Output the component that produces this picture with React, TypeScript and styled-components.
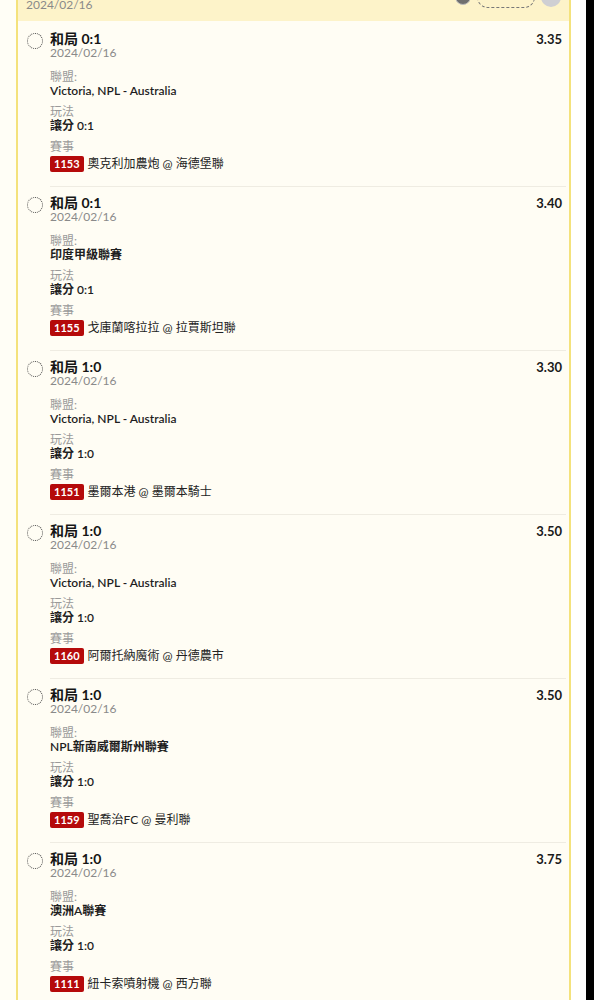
import styled, { createGlobalStyle } from "styled-components";

interface Bet {
  id: string;
  pick: string;
  odds: string;
  date: string;
  league: string;
  market: string;
  matchNo: string;
  match: string;
}

const bets: Bet[] = [
  { id: "a", pick: "和局 0:1", odds: "3.35", date: "2024/02/16", league: "Victoria, NPL - Australia", market: "讓分 0:1", matchNo: "1153", match: "奧克利加農炮 @ 海德堡聯" },
  { id: "b", pick: "和局 0:1", odds: "3.40", date: "2024/02/16", league: "印度甲級聯賽", market: "讓分 0:1", matchNo: "1155", match: "戈庫蘭喀拉拉 @ 拉賈斯坦聯" },
  { id: "c", pick: "和局 1:0", odds: "3.30", date: "2024/02/16", league: "Victoria, NPL - Australia", market: "讓分 1:0", matchNo: "1151", match: "墨爾本港 @ 墨爾本騎士" },
  { id: "d", pick: "和局 1:0", odds: "3.50", date: "2024/02/16", league: "Victoria, NPL - Australia", market: "讓分 1:0", matchNo: "1160", match: "阿爾托納魔術 @ 丹德農市" },
  { id: "e", pick: "和局 1:0", odds: "3.50", date: "2024/02/16", league: "NPL新南威爾斯州聯賽", market: "讓分 1:0", matchNo: "1159", match: "聖喬治FC @ 曼利聯" },
  { id: "f", pick: "和局 1:0", odds: "3.75", date: "2024/02/16", league: "澳洲A聯賽", market: "讓分 1:0", matchNo: "1111", match: "紐卡索噴射機 @ 西方聯" },
];

const GlobalStyle = createGlobalStyle`
  body {
    margin: 0;
    background: #ffffff;
    font-family: Lato, "Noto Sans CJK TC", sans-serif;
    color: #1c1c1c;
    overflow: hidden;
  }
`;

export default function App() {
  return (
    <>
      <GlobalStyle />
      <StyledPage>
        <StyledMain>
          <StyledCard>
            <StyledHeader>
              <StyledHeaderText>
                <StyledTitle>注單</StyledTitle>
                <StyledDate>2024/02/16</StyledDate>
              </StyledHeaderText>
              <StyledHeaderTools>
                <StyledDot />
                <StyledPill />
                <StyledAvatar />
              </StyledHeaderTools>
            </StyledHeader>
            <StyledList>
              {bets.map((bet) => (
                <StyledItem key={bet.id}>
                  <StyledRadio aria-label="select" />
                  <StyledBody>
                    <StyledTopRow>
                      <StyledTitle>{bet.pick}</StyledTitle>
                      <StyledOdds>{bet.odds}</StyledOdds>
                    </StyledTopRow>
                    <StyledDate>{bet.date}</StyledDate>
                    <StyledFields>
                      <StyledField>
                        <StyledLabel>聯盟:</StyledLabel>
                        <StyledValue>{bet.league}</StyledValue>
                      </StyledField>
                      <StyledField>
                        <StyledLabel>玩法</StyledLabel>
                        <StyledValue>{bet.market}</StyledValue>
                      </StyledField>
                      <StyledField>
                        <StyledLabel>賽事</StyledLabel>
                        <StyledMatchRow>
                          <StyledBadge>{bet.matchNo}</StyledBadge>
                          <StyledMatch>{bet.match}</StyledMatch>
                        </StyledMatchRow>
                      </StyledField>
                    </StyledFields>
                  </StyledBody>
                </StyledItem>
              ))}
            </StyledList>
          </StyledCard>
        </StyledMain>
        <StyledScrollbar />
      </StyledPage>
    </>
  );
}

const StyledPage = styled.div`
  display: flex;
  height: 1000px;
  overflow: hidden;
`;

const StyledMain = styled.div`
  flex: 1;
  padding: 0 15px 0 16px;
  background: linear-gradient(to right, #fffef6 16px, #ffffff 16px);
`;

const StyledScrollbar = styled.div`
  width: 8px;
  background: #000000;
`;

const StyledCard = styled.section`
  margin-top: -24px;
  border: 2px solid #f4e27c;
  border-radius: 4px;
  background: #fffdf4;
`;

const StyledHeader = styled.header`
  display: flex;
  align-items: center;
  justify-content: space-between;
  padding: 6px 8px 10px 8px;
  background: #fdf3c9;
`;

const StyledHeaderText = styled.div`
  display: flex;
  flex-direction: column;
`;

const StyledHeaderTools = styled.div`
  display: flex;
  align-items: center;
  gap: 6px;
  margin-top: -2px;
`;

const StyledDot = styled.span`
  width: 14px;
  height: 14px;
  border-radius: 50%;
  background: #6f6f6f;
  border: 1px solid #bbbbbb;
`;

const StyledPill = styled.span`
  width: 56px;
  height: 20px;
  border: 1px dashed #777;
  border-radius: 12px;
`;

const StyledAvatar = styled.span`
  width: 20px;
  height: 20px;
  border-radius: 50%;
  background: #cfcfd3;
`;

const StyledList = styled.div`
  padding-top: 2px;
`;

const StyledItem = styled.article`
  display: flex;
  align-items: flex-start;
  gap: 7px;
  padding: 0 3px 0 9px;
`;

const StyledRadio = styled.span`
  flex: none;
  width: 14px;
  height: 14px;
  margin-top: 10px;
  border: 1px dotted #444;
  border-radius: 50%;
`;

const StyledBody = styled.div`
  flex: 1;
  padding: 9px 4px 14px 0;
  border-bottom: 1px solid #efece2;
`;

const StyledTopRow = styled.div`
  display: flex;
  justify-content: space-between;
  align-items: baseline;
`;

const StyledTitle = styled.div`
  font-size: 14px;
  line-height: 14px;
  font-weight: 700;
  color: #151515;
`;

const StyledOdds = styled.div`
  font-size: 13px;
  line-height: 14px;
  font-weight: 700;
  color: #1a1a1a;
`;

const StyledDate = styled.div`
  font-size: 12px;
  line-height: 13px;
  color: #8a8a8a;
`;

const StyledFields = styled.div`
  display: flex;
  flex-direction: column;
  gap: 7px;
  margin-top: 11px;
`;

const StyledField = styled.div`
  display: flex;
  flex-direction: column;
`;

const StyledLabel = styled.div`
  font-size: 12px;
  line-height: 14px;
  color: #9a9a9a;
`;

const StyledValue = styled.div`
  font-size: 12px;
  line-height: 14px;
  font-weight: 600;
  color: #1e1e1e;
`;

const StyledMatchRow = styled.div`
  display: flex;
  align-items: center;
  gap: 4px;
  margin-top: 2px;
`;

const StyledBadge = styled.span`
  height: 16px;
  padding: 0 4px;
  min-width: 25px;
  background: #b50a0a;
  border-radius: 2px;
  color: #ffffff;
  font-size: 11px;
  line-height: 16px;
  font-weight: 700;
  text-align: center;
`;

const StyledMatch = styled.span`
  font-size: 12px;
  line-height: 16px;
  color: #222;
`;
